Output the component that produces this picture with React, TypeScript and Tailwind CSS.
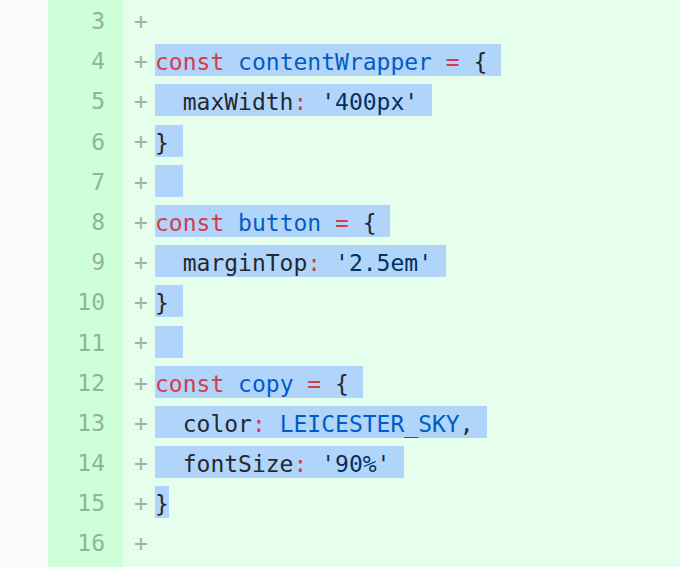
import React from "react";

type Token = [string, string];

const RED = "text-[#d73a49]";
const BLUE = "text-[#005cc5]";
const DARK = "text-[#24292e]";
const STR = "text-[#032f62]";

interface DiffLine {
    num: number;
    tokens: Token[] | null; // null = not selected
    last?: boolean;
}

const lines: DiffLine[] = [
    { num: 3, tokens: null },
    { num: 4, tokens: [["const", RED], [" ", DARK], ["contentWrapper", BLUE], [" ", DARK], ["=", RED], [" {", DARK]] },
    { num: 5, tokens: [["  maxWidth", DARK], [":", RED], [" ", DARK], ["'400px'", STR]] },
    { num: 6, tokens: [["}", DARK]] },
    { num: 7, tokens: [["\u00a0", DARK]] },
    { num: 8, tokens: [["const", RED], [" ", DARK], ["button", BLUE], [" ", DARK], ["=", RED], [" {", DARK]] },
    { num: 9, tokens: [["  marginTop", DARK], [":", RED], [" ", DARK], ["'2.5em'", STR]] },
    { num: 10, tokens: [["}", DARK]] },
    { num: 11, tokens: [["\u00a0", DARK]] },
    { num: 12, tokens: [["const", RED], [" ", DARK], ["copy", BLUE], [" ", DARK], ["=", RED], [" {", DARK]] },
    { num: 13, tokens: [["  color", DARK], [":", RED], [" ", DARK], ["LEICESTER_SKY", BLUE], [",", DARK]] },
    { num: 14, tokens: [["  fontSize", DARK], [":", RED], [" ", DARK], ["'90%'", STR]] },
    { num: 15, tokens: [["}", DARK]], last: true },
    { num: 16, tokens: null },
];

const mono = { fontFamily: "'DejaVu Sans Mono', 'Liberation Mono', monospace" };

export default function App() {
    return (
        <div className="flex h-[567px] w-[680px] overflow-hidden text-[23px]" style={mono}>
            <div className="w-[48px] shrink-0 bg-[#fafbfc]" />
            <div className="w-[75px] shrink-0 bg-[#cdffd8] pr-[18px] text-right text-[#93b39b]">
                {lines.map((l) => (
                    <div key={l.num} className="h-[40.2px] pt-[2px] leading-[38.2px]">
                        {l.num}
                    </div>
                ))}
            </div>
            <div className="flex-1 bg-[#e6ffed] pl-[11px]">
                {lines.map((l) => (
                    <div key={l.num} className="flex h-[40.2px] items-center whitespace-pre">
                        <span className="w-[21px] shrink-0 pt-[2px] text-[#9fb2a6]">+</span>
                        {l.tokens && (
                            <span className="inline-block h-[32px] bg-[#b1d5fa] pt-[4px] leading-[28px]">
                                {l.tokens.map(([t, c], i) => (
                                    <span key={i} className={c}>
                                        {t}
                                    </span>
                                ))}
                                {!l.last && "\u00a0"}
                            </span>
                        )}
                    </div>
                ))}
            </div>
        </div>
    );
}
